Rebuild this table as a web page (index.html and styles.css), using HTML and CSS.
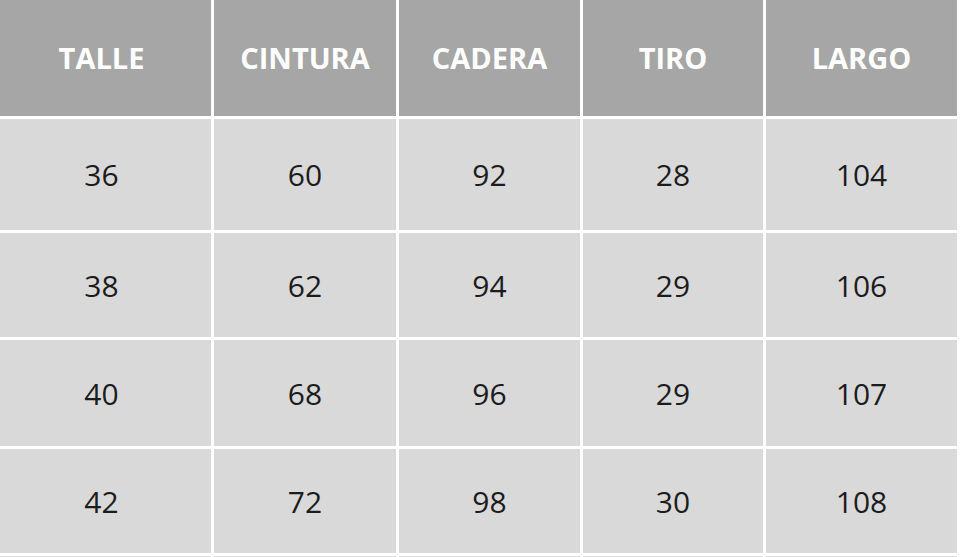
FILE: index.html
```html
<!DOCTYPE html>
<html lang="es">
<head>
<meta charset="utf-8">
<title>Tabla de talles</title>
<link rel="stylesheet" href="styles.css">
</head>
<body>
<div class="sizes">
  <div class="cell head first">TALLE</div>
  <div class="cell head">CINTURA</div>
  <div class="cell head">CADERA</div>
  <div class="cell head">TIRO</div>
  <div class="cell head">LARGO</div>

  <div class="cell first">36</div>
  <div class="cell">60</div>
  <div class="cell">92</div>
  <div class="cell">28</div>
  <div class="cell">104</div>

  <div class="cell first">38</div>
  <div class="cell">62</div>
  <div class="cell">94</div>
  <div class="cell">29</div>
  <div class="cell">106</div>

  <div class="cell first">40</div>
  <div class="cell">68</div>
  <div class="cell">96</div>
  <div class="cell">29</div>
  <div class="cell">107</div>

  <div class="cell first">42</div>
  <div class="cell">72</div>
  <div class="cell">98</div>
  <div class="cell">30</div>
  <div class="cell">108</div>

  <div class="cell first"></div>
  <div class="cell"></div>
  <div class="cell"></div>
  <div class="cell"></div>
  <div class="cell"></div>
</div>
</body>
</html>
```

FILE: styles.css
```css
html, body {
  margin: 0;
  padding: 0;
  background: #ffffff;
  overflow: hidden;
}

.sizes {
  display: grid;
  grid-template-columns: 211px 182px 181px 180px 191px;
  grid-template-rows: 116px 111px 104px 106px 104px 104px;
  gap: 3px;
  font-family: "Open Sans", "Liberation Sans", sans-serif;
}

.cell {
  display: flex;
  align-items: center;
  justify-content: center;
  background: #d9d9d9;
  color: #1c1c1c;
  font-size: 30px;
  font-weight: 400;
}

.cell.first {
  padding-right: 8px;
}

.cell.head {
  background: #a6a6a6;
  color: #ffffff;
  font-size: 29px;
  font-weight: 700;
  padding-bottom: 2px;
}
```
